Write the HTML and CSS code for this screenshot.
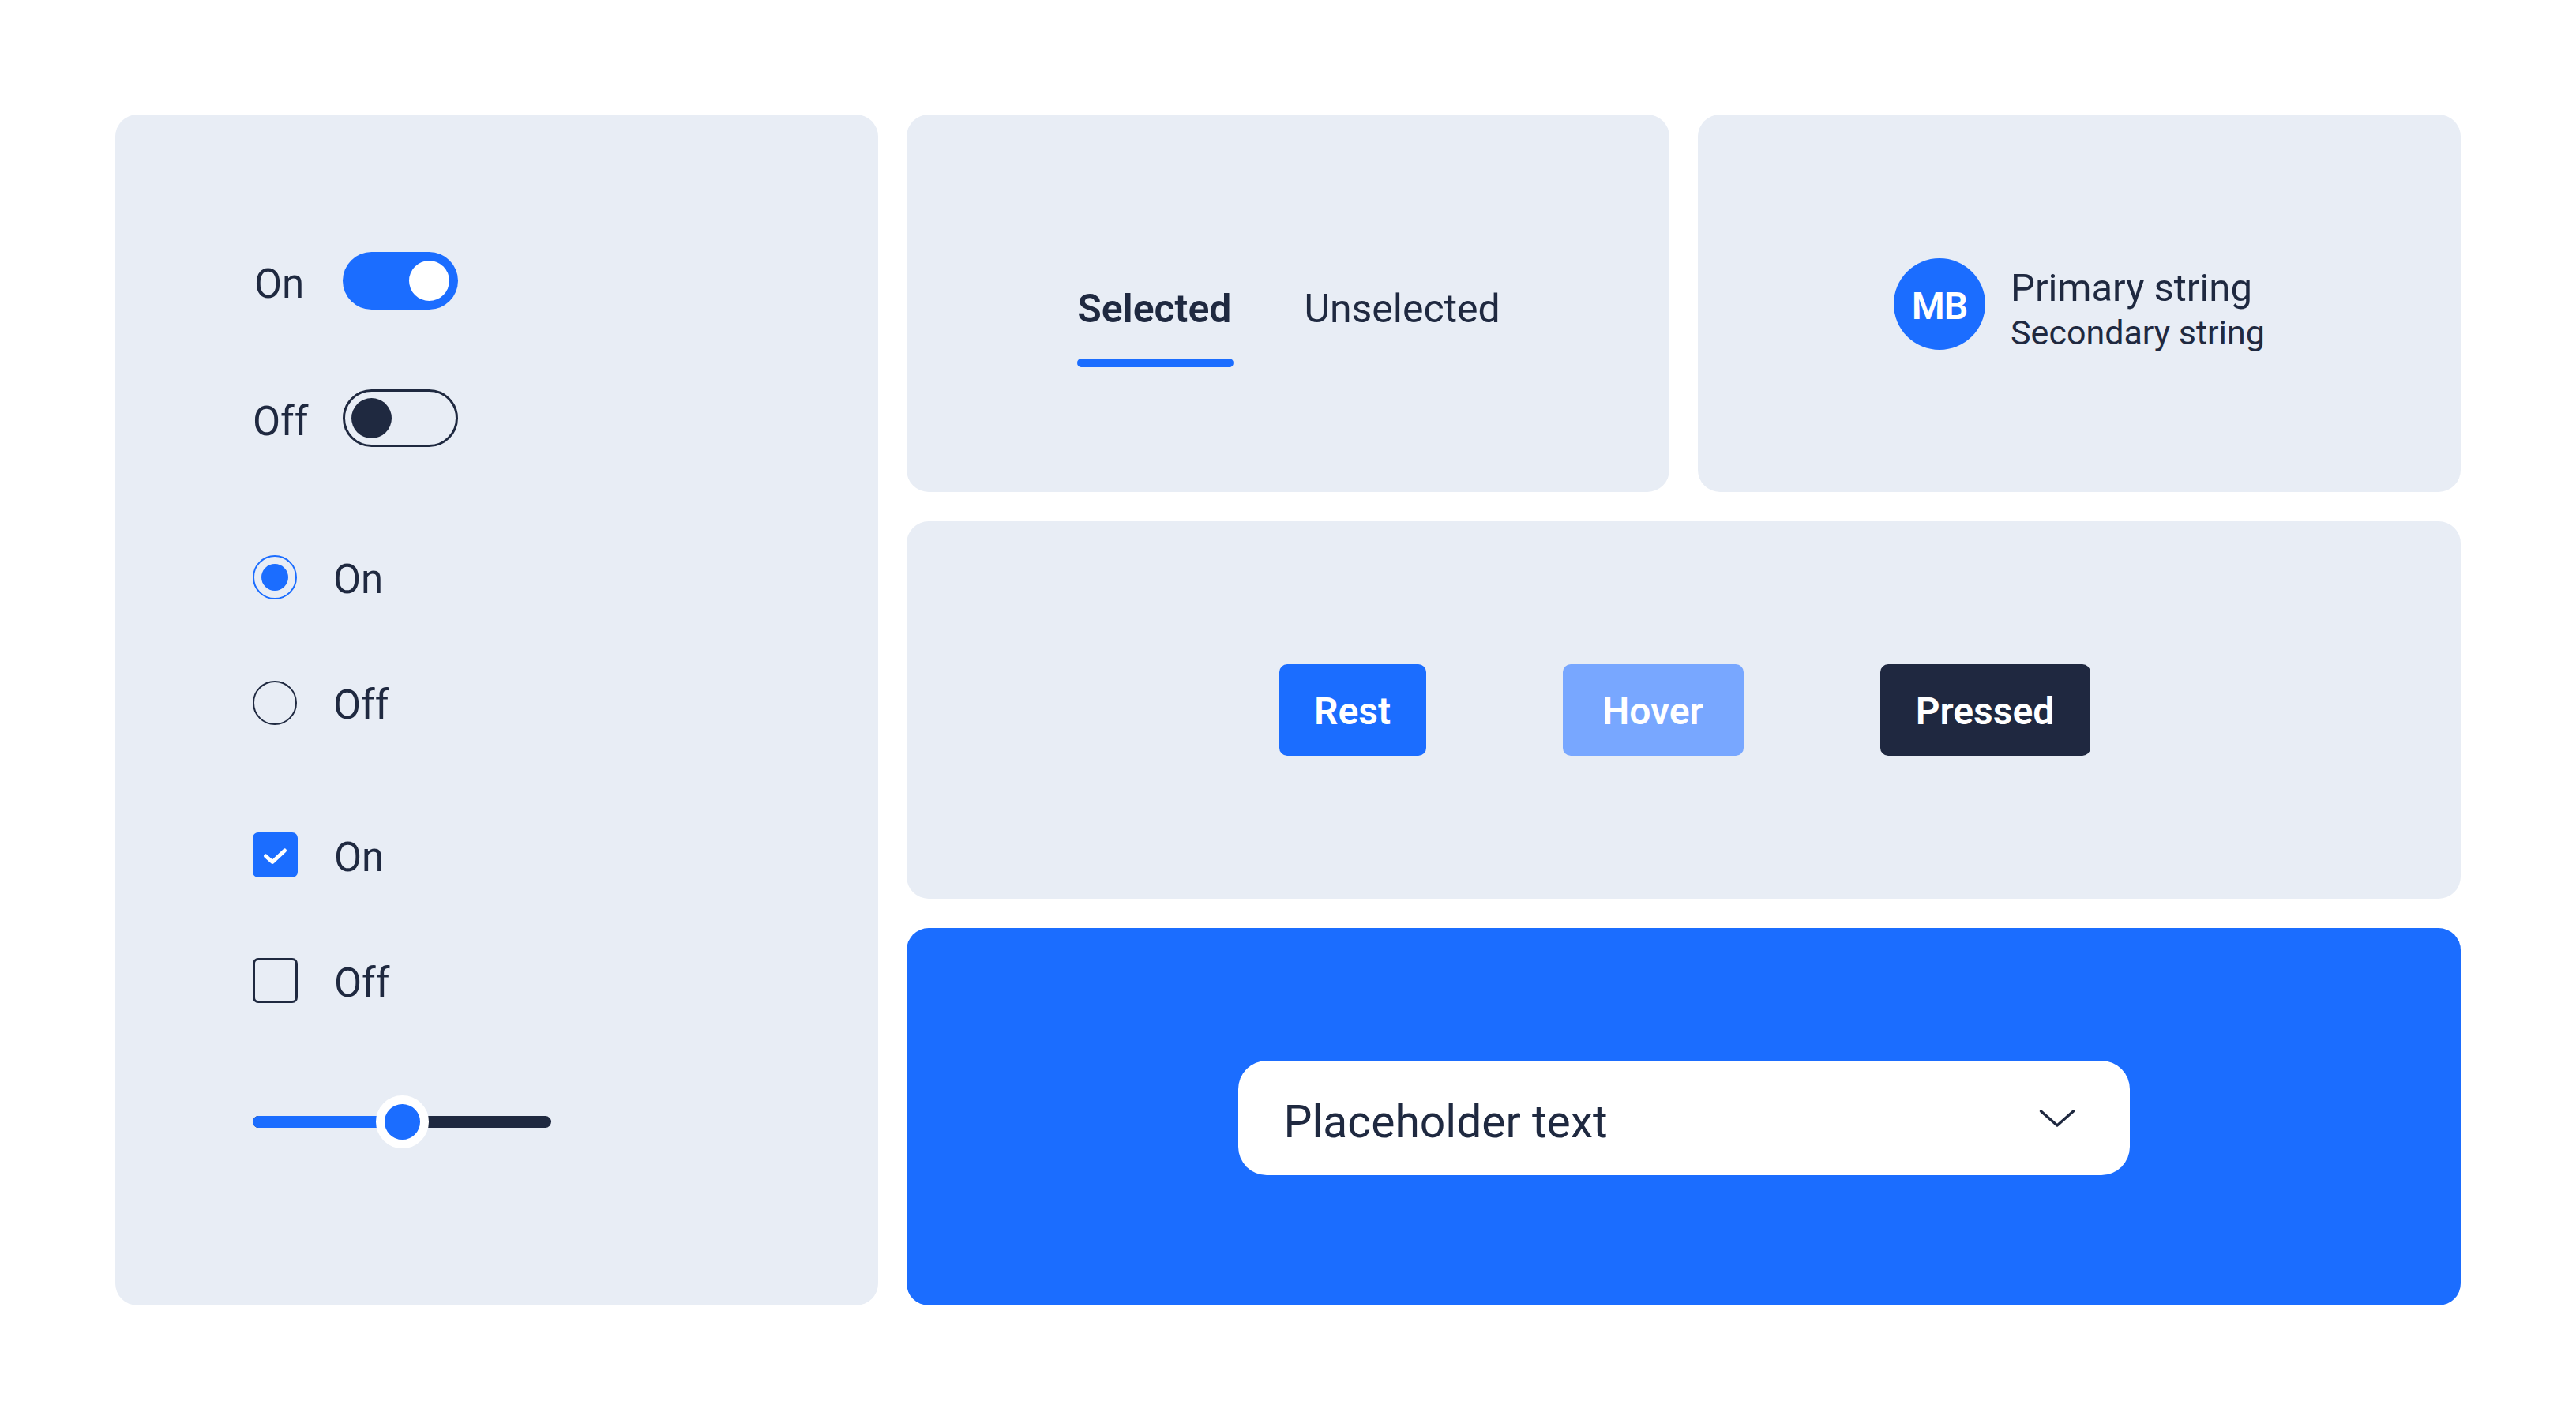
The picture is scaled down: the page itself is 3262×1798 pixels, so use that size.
FILE: index.html
```html
<!DOCTYPE html>
<html lang="en">
<head>
<meta charset="utf-8">
<title>Controls</title>
<link rel="stylesheet" href="styles.css">
</head>
<body>
<main class="board">
  <section class="card controls">
    <div class="row toggle-row first">
      <span class="label">On</span>
      <span class="toggle on"><span class="knob"></span></span>
    </div>
    <div class="row toggle-row second">
      <span class="label">Off</span>
      <span class="toggle off"><span class="knob"></span></span>
    </div>
    <div class="row radio-row r1">
      <span class="radio checked"><span class="dot"></span></span>
      <span class="label">On</span>
    </div>
    <div class="row radio-row r2">
      <span class="radio"></span>
      <span class="label">Off</span>
    </div>
    <div class="row check-row c1">
      <span class="checkbox checked">
        <svg viewBox="0 0 57 57" width="57" height="57"><path d="M16.5 30 L25 37.5 L40.5 23" fill="none" stroke="#fff" stroke-width="5" stroke-linecap="round" stroke-linejoin="round"/></svg>
      </span>
      <span class="label">On</span>
    </div>
    <div class="row check-row c2">
      <span class="checkbox"></span>
      <span class="label">Off</span>
    </div>
    <div class="slider">
      <div class="track"><div class="fill" style="width: 50%"></div></div>
      <span class="thumb" style="left: 50%"></span>
    </div>
  </section>

  <section class="card tabs-card">
    <div class="tabs">
      <span class="tab selected">Selected</span>
      <span class="tab">Unselected</span>
    </div>
  </section>

  <section class="card persona-card">
    <div class="persona">
      <span class="avatar">MB</span>
      <div class="persona-text">
        <div class="primary">Primary string</div>
        <div class="secondary">Secondary string</div>
      </div>
    </div>
  </section>

  <section class="card buttons-card">
    <span class="btn rest">Rest</span>
    <span class="btn hover">Hover</span>
    <span class="btn pressed">Pressed</span>
  </section>

  <section class="card blue-card">
    <div class="dropdown">
      <span class="placeholder">Placeholder text</span>
      <svg class="chevron" viewBox="0 0 46 24" width="46" height="24"><path d="M2.5 3 L23 21 L43.5 3" fill="none" stroke="#1f2940" stroke-width="3.5" stroke-linecap="round" stroke-linejoin="round"/></svg>
    </div>
  </section>
</main>
</body>
</html>
```

FILE: styles.css
```css
* { box-sizing: border-box; }

html, body {
  margin: 0;
  padding: 0;
  background: #ffffff;
}

body {
  font-family: Roboto, "Liberation Sans", sans-serif;
  color: #1f2940;
}

.board {
  width: 3262px;
  padding: 145px 146px;
  display: grid;
  grid-template-columns: repeat(3, 1fr);
  grid-template-rows: repeat(3, 478px);
  column-gap: 36px;
  row-gap: 37px;
}

.card {
  background: #e8edf5;
  border-radius: 28px;
}

/* ---------- left controls card ---------- */
.controls {
  grid-column: 1;
  grid-row: 1 / 4;
  padding: 174px 0 0 174px;
  display: flex;
  flex-direction: column;
}

.row {
  display: flex;
  align-items: center;
}

.label {
  font-size: 51px;
  line-height: 60px;
  color: #1f2940;
}

.toggle-row { height: 73px; gap: 47px; }
.toggle-row .label { width: 67px; padding-top: 8px; }
.toggle-row.first .label { padding-left: 2px; }
.toggle-row.second { margin-top: 101px; }

.toggle {
  width: 146px;
  height: 73px;
  border-radius: 37px;
  display: flex;
  align-items: center;
  padding: 0 11px;
}

.toggle.on {
  background: #1b6dff;
  justify-content: flex-end;
}

.toggle.on .knob {
  width: 51px;
  height: 51px;
  border-radius: 50%;
  background: #ffffff;
}

.toggle.off {
  border: 3.5px solid #1f2940;
  padding: 0 7.5px;
  justify-content: flex-start;
}

.toggle.off .knob {
  width: 51px;
  height: 51px;
  border-radius: 50%;
  background: #1f2940;
}

.radio-row, .check-row { gap: 46px; }
.radio-row { height: 56px; }
.radio-row.r1 { margin-top: 137px; }
.radio-row.r2 { margin-top: 103px; }
.radio-row .label, .check-row .label { padding-top: 6px; }

.radio {
  width: 56px;
  height: 56px;
  border-radius: 50%;
  border: 2.5px solid #1f2940;
  display: flex;
  align-items: center;
  justify-content: center;
  flex: none;
}

.radio.checked {
  border-color: #1b6dff;
}

.radio .dot {
  width: 34px;
  height: 34px;
  border-radius: 50%;
  background: #1b6dff;
}

.check-row { height: 57px; }
.check-row.c1 { margin-top: 136px; }
.check-row.c2 { margin-top: 102px; }

.checkbox {
  width: 57px;
  height: 57px;
  border-radius: 7px;
  border: 3.5px solid #1f2940;
  flex: none;
  display: block;
}

.checkbox.checked {
  background: #1b6dff;
  border: none;
}

.checkbox svg { display: block; }

.slider {
  position: relative;
  width: 378px;
  height: 67px;
  margin-top: 117px;
  display: flex;
  align-items: center;
}

.track {
  width: 100%;
  height: 15px;
  border-radius: 8px;
  background: #1f2940;
  overflow: hidden;
}

.fill {
  height: 100%;
  background: #1b6dff;
}

.thumb {
  position: absolute;
  top: 0;
  width: 67px;
  height: 67px;
  margin-left: -33.5px;
  border-radius: 50%;
  background: #1b6dff;
  border: 11.5px solid #ffffff;
}

/* ---------- tabs ---------- */
.tabs-card {
  grid-column: 2;
  grid-row: 1;
  display: flex;
  align-items: center;
  justify-content: center;
}

.tabs {
  display: flex;
  gap: 92px;
  padding-top: 14px;
  padding-left: 2px;
}

.tab {
  position: relative;
  font-size: 50px;
  line-height: 58px;
  color: #1f2940;
}

.tab.selected {
  font-weight: 600;
}

.tab.selected::after {
  content: "";
  position: absolute;
  left: 0;
  right: -3px;
  top: calc(100% + 34px);
  height: 11px;
  border-radius: 6px;
  background: #1b6dff;
}

/* ---------- persona ---------- */
.persona-card {
  grid-column: 3;
  grid-row: 1;
  display: flex;
  align-items: center;
  justify-content: center;
}

.persona {
  display: flex;
  align-items: center;
  gap: 32px;
  padding-top: 2px;
}

.avatar {
  width: 116px;
  height: 116px;
  border-radius: 50%;
  background: #1b6dff;
  color: #ffffff;
  font-size: 48px;
  font-weight: 600;
  display: flex;
  align-items: center;
  justify-content: center;
  letter-spacing: -1px;
  padding-top: 4px;
}

.persona-text {
  padding-top: 12px;
}

.primary {
  font-size: 49px;
  line-height: 60px;
}

.secondary {
  font-size: 43px;
  line-height: 52px;
}

/* ---------- buttons ---------- */
.buttons-card {
  grid-column: 2 / 4;
  grid-row: 2;
  display: flex;
  align-items: center;
  justify-content: center;
  gap: 173px;
  padding-left: 2px;
}

.btn {
  height: 116px;
  padding-top: 2px;
  border-radius: 10px;
  display: flex;
  align-items: center;
  justify-content: center;
  color: #ffffff;
  font-size: 48px;
  font-weight: 600;
}

.btn.rest { width: 186px; background: #1b6dff; }
.btn.hover { width: 229px; background: #78a7ff; }
.btn.pressed { width: 266px; background: #1f2840; }

/* ---------- dropdown ---------- */
.blue-card {
  grid-column: 2 / 4;
  grid-row: 3;
  background: #1b6dff;
  display: flex;
  align-items: center;
  justify-content: center;
}

.dropdown {
  width: 1129px;
  height: 145px;
  border-radius: 36px;
  background: #ffffff;
  display: flex;
  align-items: center;
  justify-content: space-between;
  padding: 12px 69px 0 58px;
  margin-top: 2px;
}

.placeholder {
  font-size: 57px;
  line-height: 66px;
  color: #1f2940;
}

.chevron {
  display: block;
  margin-top: -10px;
}
```
